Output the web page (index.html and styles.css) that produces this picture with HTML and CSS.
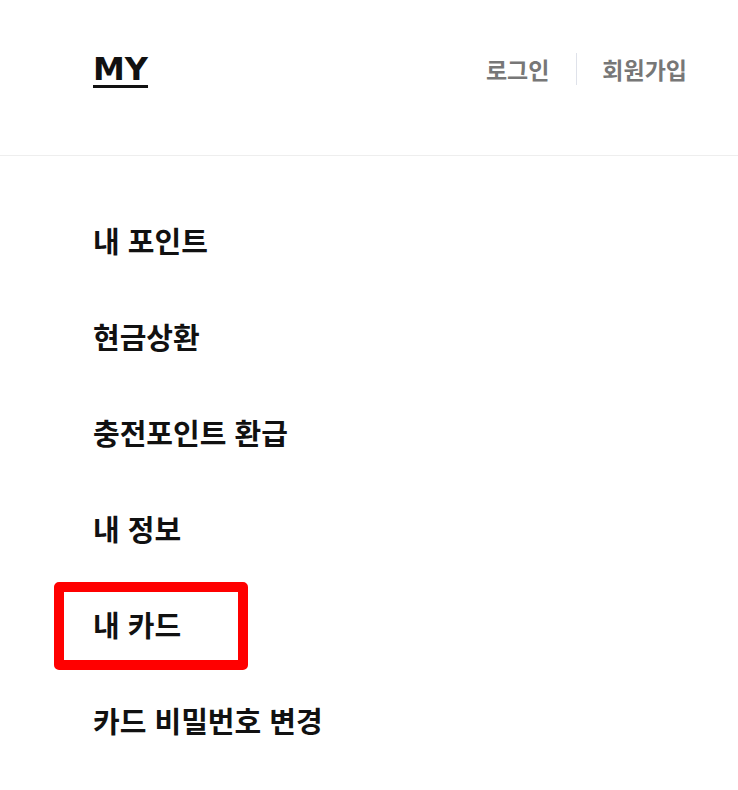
FILE: index.html
```html
<!DOCTYPE html>
<html lang="ko">
<head>
<meta charset="utf-8">
<link rel="stylesheet" href="styles.css">
</head>
<body>
<header class="header">
  <h1 class="title">MY</h1>
  <nav class="auth">
    <a class="auth-link" href="#">로그인</a>
    <span class="divider"></span>
    <a class="auth-link" href="#">회원가입</a>
  </nav>
</header>
<ul class="menu">
  <li class="menu-item">내 포인트</li>
  <li class="menu-item">현금상환</li>
  <li class="menu-item">충전포인트 환급</li>
  <li class="menu-item">내 정보</li>
  <li class="menu-item highlighted">내 카드<span class="mark"></span></li>
  <li class="menu-item">카드 비밀번호 변경</li>
</ul>
</body>
</html>
```
FILE: styles.css
```css
html, body {
  margin: 0;
  padding: 0;
  background: #fff;
  font-family: "Noto Sans CJK KR", "Noto Sans", sans-serif;
  color: #111;
}
.header {
  height: 156px;
  box-sizing: border-box;
  border-bottom: 1px solid #eeeeee;
  display: flex;
  align-items: center;
  justify-content: space-between;
  padding: 0 51px 18px 93px;
}
.title {
  margin: 0;
  font-family: "DejaVu Sans", sans-serif;
  font-size: 32px;
  font-weight: 700;
  text-decoration: underline;
  text-decoration-thickness: 3px;
  text-underline-offset: 5px;
  color: #111;
}
.auth {
  display: flex;
  align-items: center;
}
.auth-link {
  color: #777;
  font-size: 23px;
  font-weight: 700;
  text-decoration: none;
}
.divider {
  width: 1px;
  height: 32px;
  background: #dfe2ea;
  margin: 0 25px 0 27px;
}
.menu {
  list-style: none;
  margin: 0;
  padding: 36px 0 0 93px;
}
.menu-item {
  height: 96px;
  display: flex;
  align-items: center;
  font-size: 29px;
  font-weight: 700;
  color: #111;
  position: relative;
}
.mark {
  position: absolute;
  left: -39px;
  top: 6px;
  width: 194px;
  height: 88px;
  box-sizing: border-box;
  border: 10px solid #ff0000;
  border-radius: 5px;
}
```
